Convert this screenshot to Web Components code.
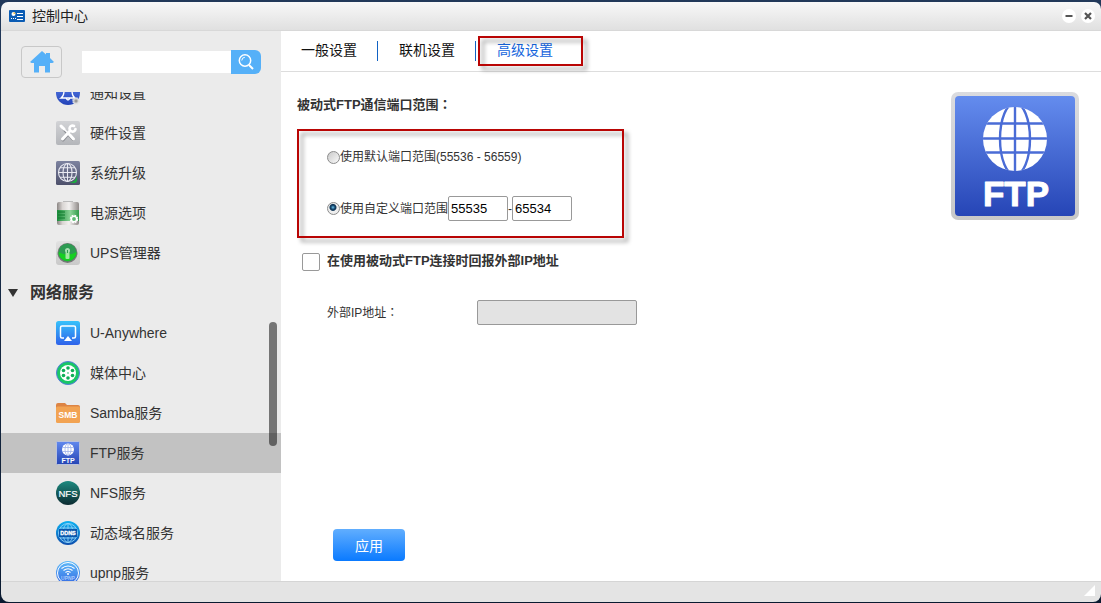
<!DOCTYPE html>
<html lang="zh-CN">
<head>
<meta charset="utf-8">
<title>控制中心</title>
<style>
  html, body {
    height: 100%;
    margin: 0;
  }
  body {
    background: linear-gradient(#22395a, #0a1a30);
    font-family: "Liberation Sans", "Noto Sans CJK SC", sans-serif;
    font-size: 14px;
    color: #333;
    overflow: hidden;
  }
</style>
</head>
<body>

<control-window heading="控制中心">
  <side-bar slot="side">
    <nav-item icon="notice">通知设置</nav-item>
    <nav-item icon="hardware">硬件设置</nav-item>
    <nav-item icon="upgrade">系统升级</nav-item>
    <nav-item icon="power">电源选项</nav-item>
    <nav-item icon="ups">UPS管理器</nav-item>
    <nav-group>网络服务</nav-group>
    <nav-item icon="anywhere">U-Anywhere</nav-item>
    <nav-item icon="media">媒体中心</nav-item>
    <nav-item icon="samba">Samba服务</nav-item>
    <nav-item icon="ftp" selected>FTP服务</nav-item>
    <nav-item icon="nfs">NFS服务</nav-item>
    <nav-item icon="ddns">动态域名服务</nav-item>
    <nav-item icon="upnp">upnp服务</nav-item>
  </side-bar>
  <tab-bar>
    <tab-item>一般设置</tab-item>
    <tab-item>联机设置</tab-item>
    <tab-item active>高级设置</tab-item>
  </tab-bar>
  <ftp-settings></ftp-settings>
</control-window>

<script>
/* ---------- iconos ---------- */
const globe = `
  <clipPath id="ball"><circle cx="64" cy="47" r="32"/></clipPath>
  <circle cx="64" cy="47" r="32" fill="#fff"/>
  <g fill="none" stroke="#4a6cd6" stroke-width="2.4" clip-path="url(#ball)">
    <path d="M64 14V80M31 31.5H97M31 46.5H97M31 60.5H97"/>
    <ellipse cx="64" cy="47" rx="15" ry="36"/>
  </g>`;

const icons = {
  notice: `
    <defs><linearGradient id="g" x2="0" y2="1"><stop stop-color="#5d83ec"/><stop offset="1" stop-color="#2343b8"/></linearGradient></defs>
    <circle cx="12" cy="12" r="12" fill="url(#g)"/>
    <path d="M5 17q3-2 3-7a4 4 0 0 1 8 0q0 5 3 7zM10 17q2 4 4 0" fill="none" stroke="#fff" stroke-width="1.3"/>
    <circle cx="20" cy="20" r="2.7" fill="none" stroke="#e3e3e3" stroke-width="2.2" stroke-dasharray="1.5 .6"/>
    <circle cx="20" cy="20" r="2.2" fill="#999" stroke="#ddd"/>`,
  hardware: `
    <defs><linearGradient id="g" x2="0" y2="1"><stop stop-color="#d2d3d6"/><stop offset="1" stop-color="#b4b6ba"/></linearGradient></defs>
    <rect width="24" height="24" rx="2" fill="url(#g)"/>
    <g stroke="#8d8f94" stroke-linecap="round" fill="none" transform="translate(0 1)">
      <path d="M7 7l10 11" stroke-width="2"/><path d="M14 10l-7 8" stroke-width="3"/>
    </g>
    <g stroke="#fff" stroke-linecap="round" fill="none">
      <path d="M5 5l3 3" stroke-width="3"/><path d="M8 8l5 5" stroke-width="1.5"/><path d="M13 13l4.5 5" stroke-width="3"/>
      <path d="M6.5 18L14 10" stroke-width="3"/>
      <path d="M18 5A3 3 0 1 0 19.500 8" stroke-width="2.600"/>
    </g>`,
  upgrade: `
    <defs><linearGradient id="g" x2="0" y2="1"><stop stop-color="#7d83a0"/><stop offset="1" stop-color="#4d506b"/></linearGradient></defs>
    <rect width="24" height="24" rx="1.5" fill="url(#g)"/>
    <g fill="none" stroke="#e9eaf2" stroke-width="1.1">
      <circle cx="11.5" cy="11.5" r="9"/><ellipse cx="11.5" cy="11.5" rx="4.5" ry="9"/>
      <path d="M11.5 2.5V20.5M2.5 11.5H20.5M4 6.8H19M4 16.2H19"/>
    </g>
    <path d="M12 21q8 1 9-6v4q0 3-3 3z" fill="#19b23c"/>`,
  power: `
    <defs><linearGradient id="g"><stop stop-color="#8b8684"/><stop offset=".25" stop-color="#d9d5d3"/><stop offset=".55" stop-color="#f3f1f0"/><stop offset="1" stop-color="#8f8a88"/></linearGradient>
    <linearGradient id="h"><stop stop-color="#198a3a"/><stop offset=".6" stop-color="#8bd497"/><stop offset="1" stop-color="#2f9c49"/></linearGradient></defs>
    <rect x="7" y="0" width="10" height="3" fill="#bbb"/>
    <rect x="1" y="1" width="22" height="23" rx="2" fill="url(#g)"/>
    <rect x="1" y="9" width="22" height="11" fill="url(#h)"/>
    <path d="M2 11H9M2 14H9M2 17H9" stroke="#0e7a2d"/>
    <circle cx="18" cy="18" r="3.2" fill="none" stroke="#fff" stroke-width="2" stroke-dasharray="1.7 .8"/>
    <circle cx="18" cy="18" r="2.6" fill="#5db973" stroke="#fff" stroke-width="1.4"/>`,
  ups: `
    <defs><linearGradient id="g" x2="0" y2="1"><stop stop-color="#e2e2e2"/><stop offset="1" stop-color="#c9c9c9"/></linearGradient></defs>
    <rect width="24" height="24" rx="3" fill="url(#g)"/>
    <circle cx="11.5" cy="12" r="10" fill="#777"/>
    <circle cx="11.5" cy="11.5" r="9" fill="#2d9b52"/>
    <path d="M2.5 11a9 9 0 0 0 18 0q-9 5-18 0z" fill="#16cf22"/>
    <circle cx="11.5" cy="9.5" r="2.5" fill="#a9dfb2"/>
    <rect x="9.5" y="11" width="4" height="7" rx="1" fill="#a2e8a2"/>
    <rect x="11" y="9" width="1" height="3" fill="#2d9b52"/>`,
  anywhere: `
    <defs><linearGradient id="g" x2="0" y2="1"><stop stop-color="#37c2fb"/><stop offset="1" stop-color="#2f62ea"/></linearGradient></defs>
    <rect width="24" height="24" rx="2.5" fill="url(#g)"/>
    <path d="M8 17H6q-1.5 0-1.5-1.5V6.500Q4.5 5 6 5H18q1.5 0 1.5 1.5v9q0 1.5-1.5 1.5h-2" fill="none" stroke="#fff" stroke-width="1.5"/>
    <path d="M12 15l4 5H8z" fill="#fff"/>`,
  media: `
    <circle cx="12" cy="12" r="11.5" fill="#19c765" stroke="#557bdc"/>
    <circle cx="12" cy="12" r="8" fill="#fff"/>
    <g fill="#0fae56"><circle cx="12" cy="7" r="1.8"/><circle cx="16.5" cy="9.5" r="1.8"/><circle cx="16.5" cy="14.5" r="1.8"/><circle cx="12" cy="17" r="1.8"/><circle cx="7.5" cy="14.5" r="1.8"/><circle cx="7.5" cy="9.5" r="1.8"/><circle cx="12" cy="12" r=".8"/></g>`,
  samba: `
    <path d="M0 4q0-2 2-2h7l2 2h11q2 0 2 2v6H0z" fill="#dd8444"/>
    <rect y="5.5" width="24" height="16.5" rx="1.5" fill="#f2a352"/>
    <text x="12" y="17" font-size="8.5" font-weight="700" text-anchor="middle" fill="#fff">SMB</text>`,
  ftp: `
    <defs><linearGradient id="g" x2="0" y2="1"><stop stop-color="#6189ee"/><stop offset="1" stop-color="#2545b5"/></linearGradient></defs>
    <rect x=".5" y=".5" width="23" height="23" rx="1" fill="url(#g)" stroke="#b9c1dc"/>
    <circle cx="12" cy="8.5" r="6" fill="#fff"/>
    <path d="M12 2.5v12M6 6.5h12M6 10.5h12" stroke="#9fb2ea" stroke-width=".8"/>
    <ellipse cx="12" cy="8.5" rx="3" ry="6" fill="none" stroke="#9fb2ea" stroke-width=".8"/>
    <text x="12" y="21.5" font-size="7" font-weight="700" text-anchor="middle" fill="#fff">FTP</text>`,
  nfs: `
    <defs><linearGradient id="g" x2="0" y2="1"><stop stop-color="#1d8a80"/><stop offset="1" stop-color="#0c2b31"/></linearGradient></defs>
    <circle cx="12" cy="12" r="12" fill="url(#g)"/>
    <text x="12" y="15.5" font-size="9.5" text-anchor="middle" fill="#fff" stroke="#fff" stroke-width=".2">NFS</text>`,
  ddns: `
    <defs><linearGradient id="g" x2="0" y2="1"><stop stop-color="#0db2f2"/><stop offset="1" stop-color="#0d4eae"/></linearGradient></defs>
    <circle cx="12" cy="12" r="12" fill="url(#g)"/>
    <g fill="none" stroke="#8ed3f7" stroke-width=".9"><circle cx="12" cy="12" r="9.5"/><ellipse cx="12" cy="12" rx="5" ry="9.5"/><path d="M12 2.5v19M4 7h16M4 17h16"/></g>
    <rect x="3" y="8" width="18" height="8" fill="#0b57ac"/>
    <text x="12" y="14" font-size="5.5" font-weight="700" text-anchor="middle" fill="#fff" stroke="#fff" stroke-width=".3">DDNS</text>`,
  upnp: `
    <defs><linearGradient id="g" x2="0" y2="1"><stop stop-color="#5fbcf9"/><stop offset="1" stop-color="#3267e2"/></linearGradient></defs>
    <circle cx="12" cy="12" r="12" fill="url(#g)"/>
    <circle cx="12" cy="12" r="10.5" fill="none" stroke="#fff"/>
    <path d="M5.5 7.5q6.500-5 13 0M7.500 9.500q4.500-3.500 9 0M9.500 11.500q2.500-2 5 0" fill="none" stroke="#fff" stroke-width="1.1"/>
    <circle cx="12" cy="13" r="1" fill="#fff"/>
    <text x="12" y="19" font-size="5" font-weight="700" text-anchor="middle" fill="#a9cbfb">UPNP</text>`,
};

/* ---------- ventana ---------- */
class ControlWindow extends HTMLElement {
  constructor() {
    super();
    this.attachShadow({ mode: 'open' });
  }

  connectedCallback() {
    this.shadowRoot.innerHTML = `
<style>
  :host {
    display: flex;
    flex-direction: column;
    box-sizing: border-box;
    height: 100vh;
    padding: 2px 0 1px 1px;
  }
  header {
    display: flex;
    align-items: center;
    gap: 7px;
    box-sizing: border-box;
    height: 29px;
    padding: 0 6px 0 8px;
    background: linear-gradient(#f8f8f8, #e0e0e0);
    border-bottom: 1px solid #d8d8d8;
    border-radius: 7px 7px 0 0;
  }
  h1 {
    flex: 1;
    margin: 0;
    font-size: 14px;
    font-weight: 400;
    line-height: 28px;
    color: #222;
  }
  svg { display: block; }
  .controls {
    display: flex;
    gap: 5px;
  }
  .controls button {
    width: 14px;
    height: 14px;
    padding: 0;
    border: 0;
    border-radius: 50%;
    background: #fff;
  }
  .body {
    flex: 1;
    display: flex;
    min-height: 0;
  }
  main {
    flex: 1;
    display: flex;
    flex-direction: column;
    min-width: 0;
    background: #fff;
  }
  footer {
    display: flex;
    justify-content: flex-end;
    box-sizing: border-box;
    height: 21px;
    padding: 3px 6px 0 0;
    background: #e4e4e4;
    border-top: 1px solid #d5d5d5;
    border-radius: 0 0 8px 8px;
  }
</style>
<header>
  <svg width="16" height="12" viewBox="0 0 16 12">
    <rect width="16" height="12" rx="1" fill="#0b5cb4"/>
    <circle cx="4.5" cy="4" r="2" fill="#fff"/><path d="M4.5 4V2a2 2 0 0 1 2 2z" fill="#f3c14b"/>
    <path d="M2 8.5h1M4 8.5h1M6 8.5h1M8 3.500h6M8 6.500h6M8 9.500h6" stroke="#fff"/>
  </svg>
  <h1></h1>
  <div class="controls">
    <button aria-label="最小化"><svg width="14" height="14"><path d="M3.5 7h7" stroke="#555" stroke-width="2"/></svg></button>
    <button aria-label="关闭"><svg width="14" height="14"><path d="M4 4l6 6M10 4l-6 6" stroke="#555" stroke-width="2.2"/></svg></button>
  </div>
</header>
<div class="body">
  <slot name="side"></slot>
  <main><slot></slot></main>
</div>
<footer><svg width="11" height="11"><path d="M11 0V11H0z" fill="#fff"/></svg></footer>
    `;
    this.shadowRoot.querySelector('h1').textContent = this.getAttribute('heading');
  }
}

/* ---------- barra lateral ---------- */
class SideBar extends HTMLElement {
  constructor() {
    super();
    this.attachShadow({ mode: 'open' });
    this.shadowRoot.innerHTML = `
<style>
  :host {
    position: relative;
    flex: none;
    display: flex;
    flex-direction: column;
    width: 280px;
    background: #ebebeb;
  }
  form {
    display: flex;
    align-items: center;
    height: 61px;
    padding-left: 20px;
  }
  svg { display: block; }
  .home {
    display: grid;
    place-items: center;
    width: 41px;
    height: 32px;
    margin-right: 20px;
    padding: 0;
    border: 1px solid #c8c8c8;
    border-radius: 4px;
    background: #ececec;
  }
  input {
    box-sizing: border-box;
    width: 149px;
    height: 22px;
    border: 0;
    padding: 0 5px;
    background: #fff;
  }
  .search {
    display: grid;
    place-items: center;
    width: 30px;
    height: 24px;
    padding: 0;
    border: 0;
    border-radius: 0 6px 6px 0;
    background: #55b0f8;
  }
  nav {
    flex: 1;
    min-height: 0;
    overflow: hidden;
  }
  /* lista desplazada: la primera fila queda cortada */
  .list { margin-top: -19px; }
  .thumb {
    position: absolute;
    top: 291px;
    right: 4px;
    width: 8px;
    height: 124px;
    border-radius: 4px;
    background: rgba(0, 0, 0, .5);
  }
</style>
<form>
  <button type="button" class="home" aria-label="主页">
    <svg width="24" height="22" viewBox="0 0 24 22" fill="#55b0f8"><path d="M12 0l4 3.500V2h4v5l4 4-1.500 1H20v9.500h-5V15H9v6.500H4V12H1.500L0 11z"/></svg>
  </button>
  <input type="text" aria-label="搜索">
  <button type="button" class="search" aria-label="搜索">
    <svg width="18" height="18" viewBox="0 0 18 18" fill="none" stroke="#fff" stroke-width="1.5"><circle cx="8" cy="7.5" r="5.7"/><path d="M12 12l4 4" stroke-width="2"/><path d="M4.8 7.5q0-3 3-3.2" stroke-width="1"/></svg>
  </button>
</form>
<nav><div class="list"><slot></slot></div></nav>
<div class="thumb"></div>
    `;
  }
}

class NavItem extends HTMLElement {
  constructor() {
    super();
    this.attachShadow({ mode: 'open' });
  }

  connectedCallback() {
    this.shadowRoot.innerHTML = `
<style>
  :host { display: block; }
  :host([selected]) { background: #c2c2c2; }
  a {
    display: flex;
    align-items: center;
    gap: 10px;
    height: 40px;
    padding-left: 55px;
    line-height: 20px;
    color: #333;
    text-decoration: none;
  }
</style>
<a href="#${this.getAttribute('icon')}">
  <svg width="24" height="24" viewBox="0 0 24 24">${icons[this.getAttribute('icon')]}</svg>
  <span><slot></slot></span>
</a>
    `;
  }
}

class NavGroup extends HTMLElement {
  constructor() {
    super();
    this.attachShadow({ mode: 'open' });
    this.shadowRoot.innerHTML = `
<style>
  :host {
    display: flex;
    align-items: center;
    gap: 12px;
    height: 40px;
    padding-left: 7px;
    font-size: 16px;
    font-weight: 700;
    line-height: 22px;
  }
</style>
<svg width="10" height="8"><path d="M0 0H10L5 8z" fill="#333"/></svg>
<span><slot></slot></span>
    `;
  }
}

/* ---------- pestañas ---------- */
class TabBar extends HTMLElement {
  constructor() {
    super();
    this.attachShadow({ mode: 'open' });
    this.shadowRoot.innerHTML = `
<style>
  :host {
    display: flex;
    align-items: center;
    gap: 1px;
    height: 40px;
    border-bottom: 1px solid #ddd;
  }
</style>
<slot></slot>
    `;
  }
}

class TabItem extends HTMLElement {
  constructor() {
    super();
    this.attachShadow({ mode: 'open' });
    this.shadowRoot.innerHTML = `
<style>
  :host {
    position: relative;
    display: block;
    height: 20px;
    border-right: 1px solid #1162c4;
  }
  :host([active]) { border-color: transparent; }
  button {
    display: block;
    padding: 0 20px;
    border: 0;
    background: none;
    font: inherit;
    line-height: 18px;
    color: #111;
  }
  :host([active]) button { color: #1464dc; }
  mark-frame { display: none; }
  :host([active]) mark-frame {
    display: block;
    position: absolute;
    inset: -5px -10px -5px 1px;
    pointer-events: none;
  }
</style>
<button type="button"><slot></slot></button>
<mark-frame></mark-frame>
    `;
  }
}

/* ---------- marco rojo con sombra ---------- */
class MarkFrame extends HTMLElement {
  constructor() {
    super();
    this.attachShadow({ mode: 'open' });
    this.shadowRoot.innerHTML = `
<style>
  :host {
    position: relative;
    display: block;
    box-sizing: border-box;
  }
  .line {
    position: absolute;
    inset: 0;
    border: 2px solid #b90504;
    filter: drop-shadow(4px 4px 2px rgba(0, 0, 0, .4));
    pointer-events: none;
  }
</style>
<div class="line"></div>
<slot></slot>
    `;
  }
}

class FtpLogo extends HTMLElement {
  constructor() {
    super();
    this.attachShadow({ mode: 'open' });
    this.shadowRoot.innerHTML = `
<style>
  :host { display: block; }
  svg { display: block; }
</style>
<svg width="128" height="128" viewBox="0 0 128 128">
  <defs><linearGradient id="g" x2="0" y2="1"><stop stop-color="#648cee"/><stop offset="1" stop-color="#2645b6"/></linearGradient>
  <linearGradient id="edge" x2="0" y2="1"><stop stop-color="#dadbdf"/><stop offset="1" stop-color="#c8c8c8"/></linearGradient></defs>
  <rect width="128" height="128" rx="7" fill="url(#edge)"/>
  <rect x="4" y="4" width="120" height="120" rx="4" fill="url(#g)"/>
  ${globe}
  <text x="65" y="114" font-size="35" font-weight="700" text-anchor="middle" fill="#fff" stroke="#fff" stroke-linejoin="round">FTP</text>
</svg>
    `;
  }
}

/* ---------- formulario ---------- */
class FtpSettings extends HTMLElement {
  constructor() {
    super();
    this.attachShadow({ mode: 'open' });
  }

  connectedCallback() {
    this.render();
    this.bindEvents();
  }

  render() {
    this.shadowRoot.innerHTML = `
<style>
  :host {
    flex: 1;
    display: flex;
    align-items: flex-start;
    padding: 20px 22px 20px 16px;
    font-size: 12px;
  }
  form {
    flex: 1;
    align-self: stretch;
    display: flex;
    flex-direction: column;
    align-items: flex-start;
  }
  h2 {
    margin: 2px 0 14px;
    font-size: 13px;
    line-height: 20px;
  }
  /* dos puntos centrados en su celda */
  .colon { font-family: "Noto Sans CJK TC", sans-serif; }
  .ports {
    width: 327px;
    padding: 18px 0 17px 30px;
  }
  .row {
    display: flex;
    align-items: center;
    line-height: 20px;
  }
  .ports .row + .row { margin-top: 29px; }
  input { margin: 0; }
  input[type=text] {
    box-sizing: border-box;
    width: 60px;
    height: 25px;
    padding: 0 2px;
    border: 1px solid #999;
    border-radius: 2px;
    background: #fff;
    font: inherit;
    font-size: 13px;
    color: #000;
  }
  input[type=radio] {
    appearance: none;
    box-sizing: border-box;
    width: 13px;
    height: 13px;
    border: 1px solid #8c8c8c;
    border-radius: 50%;
    background: linear-gradient(135deg, #c9c9c9, #fafafa);
  }
  input[type=radio]:checked {
    background: radial-gradient(circle at 45% 40%, #6cc3ea 0, #15476f 2px, #0f3454 3px, #eee 4px);
  }
  input[type=checkbox] {
    appearance: none;
    width: 18px;
    height: 18px;
    margin: 2px 7px 0 5px;
    border: 1px solid #999;
    border-radius: 2px;
    background: #fff;
  }
  input[type=checkbox]:checked { background: #55b0f8; }
  .report {
    margin-top: 13px;
    font-size: 13px;
    font-weight: 700;
  }
  .address {
    margin-top: 29px;
    padding-left: 30px;
  }
  .address label { width: 150px; }
  .address input[type=text] {
    width: 160px;
    background: #e3e3e3;
  }
  .apply {
    width: 72px;
    height: 32px;
    margin: auto 0 0 36px;
    padding: 0;
    border: 0;
    border-radius: 4px;
    background: linear-gradient(#61aefe, #0a7aff);
    font: inherit;
    font-size: 14px;
    color: #fff;
  }
</style>
<form>
  <h2>被动式FTP通信端口范围<span class="colon" lang="zh-TW">：</span></h2>
  <mark-frame class="ports">
    <div class="row">
      <input type="radio" name="range" id="default">
      <label for="default">使用默认端口范围(55536 - 56559)</label>
    </div>
    <div class="row">
      <input type="radio" name="range" id="custom" checked>
      <label for="custom">使用自定义端口范围</label>
      <input type="text" value="55535" aria-label="起始端口"><span>-</span><input type="text" value="65534" aria-label="结束端口">
    </div>
  </mark-frame>
  <div class="row report">
    <input type="checkbox" id="report">
    <label for="report">在使用被动式FTP连接时回报外部IP地址</label>
  </div>
  <div class="row address">
    <label for="ip">外部IP地址<span class="colon" lang="zh-TW">：</span></label>
    <input type="text" id="ip" disabled>
  </div>
  <button type="button" class="apply">应用</button>
</form>
<ftp-logo></ftp-logo>
    `;
  }

  bindEvents() {
    const report = this.shadowRoot.querySelector('#report');
    const ip = this.shadowRoot.querySelector('#ip');
    report.addEventListener('change', () => {
      ip.disabled = !report.checked;
    });
  }
}

customElements.define('control-window', ControlWindow);
customElements.define('side-bar', SideBar);
customElements.define('nav-item', NavItem);
customElements.define('nav-group', NavGroup);
customElements.define('tab-bar', TabBar);
customElements.define('tab-item', TabItem);
customElements.define('mark-frame', MarkFrame);
customElements.define('ftp-logo', FtpLogo);
customElements.define('ftp-settings', FtpSettings);
</script>
</body>
</html>
